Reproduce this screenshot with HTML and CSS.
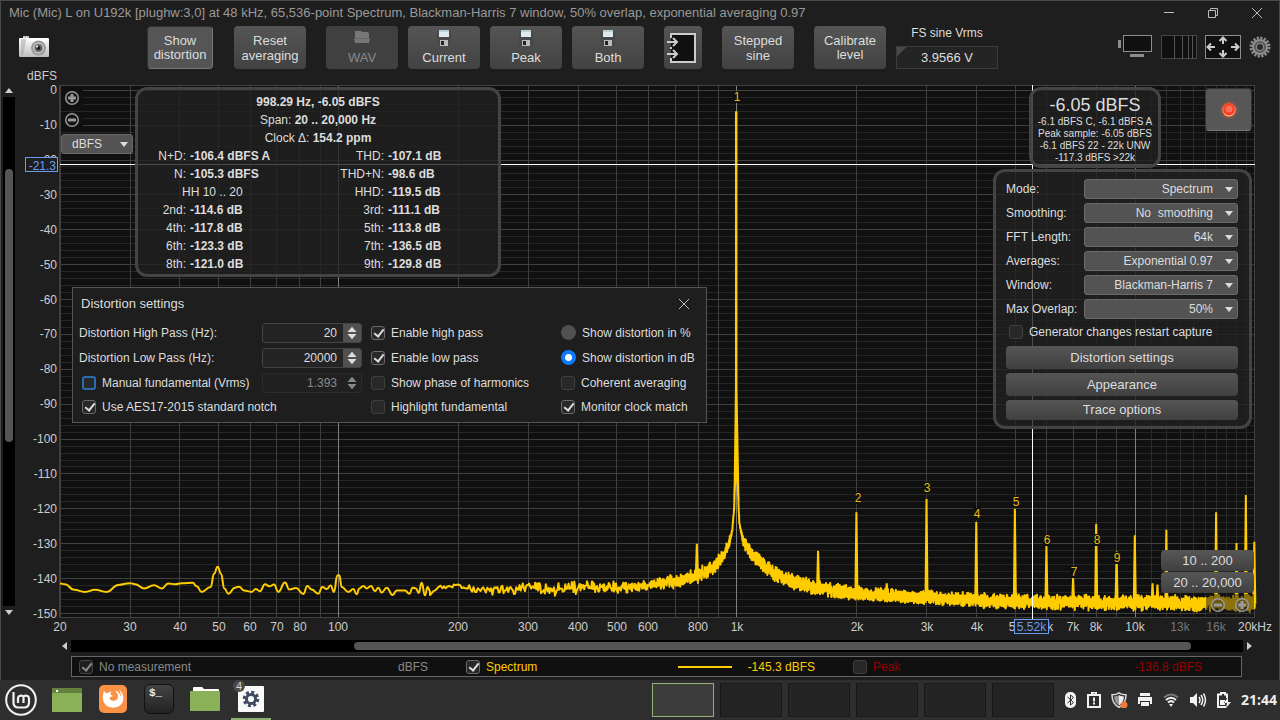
FILE: index.html
```html
<!DOCTYPE html>
<html lang="en">
<head>
    <meta charset="UTF-8">
    <meta name="viewport" content="width=device-width, initial-scale=1.0">
    <title>Spectrum Analyser</title>
    <link rel="stylesheet" href="styles.css">
</head>
<body>
    <main class="window">
        <header class="titlebar">
            <h1>Mic (Mic) L on U192k [plughw:3,0] at 48 kHz, 65,536-point Spectrum, Blackman-Harris 7 window, 50% overlap, exponential averaging 0.97</h1>
            <div class="window-buttons">
                <button type="button" aria-label="Minimise"><svg width="12" height="12"><path d="M1 5.500h10"/></svg></button>
                <button type="button" aria-label="Restore"><svg width="12" height="12"><path d="M1.500 3.500h7v7h-7zM3.500 3.500v-2h7v7h-2"/></svg></button>
                <button type="button" aria-label="Close"><svg width="12" height="12"><path d="M1 1l10 10M11 1L1 11"/></svg></button>
            </div>
        </header>

        <div class="toolbar">
            <button type="button" class="icon-button camera" aria-label="Capture graph">
                <svg width="30" height="22" viewBox="0 0 30 22">
                    <defs>
                        <linearGradient id="cam" x2="0" y2="1"><stop offset="0" stop-color="#fff"/><stop offset="1" stop-color="#bdbdbd"/></linearGradient>
                    </defs>
                    <path d="M4 0h6v3H4z" fill="#c9c9c9"/>
                    <rect y="2" width="30" height="19" rx="1" fill="url(#cam)"/>
                    <path d="M2 3h5v2l-3 14H2z" fill="#999" opacity=".45"/>
                    <path d="M10 3h17v2H10z" fill="#fff"/>
                    <circle cx="19.500" cy="12" r="7.500" fill="#999"/>
                    <circle cx="19.500" cy="12" r="5.500" fill="#c4c4c4"/>
                    <circle cx="19.500" cy="12" r="4" fill="#686868"/>
                    <circle cx="19.500" cy="12" r="2" fill="#151d30"/>
                    <circle cx="18" cy="10.500" r="1" fill="#fff"/>
                </svg>
            </button>
            <button type="button" class="tool pressed">Show distortion</button>
            <button type="button" class="tool">Reset averaging</button>
            <div class="save-group">
                <button type="button" class="tool with-icon" disabled>
                    <svg width="16" height="14" viewBox="0 0 16 14"><path d="M1 1h6l1 1h6l1 2v4l1 1-1 4H1L0 9l1-1z" fill="#777"/><path d="M1 8.500h14" stroke="#666"/></svg>
                    WAV
                </button>
                <button type="button" class="tool with-icon"><svg width="16" height="16"><use href="#disk"/></svg>Current</button>
                <button type="button" class="tool with-icon"><svg width="16" height="16"><use href="#disk"/></svg>Peak</button>
                <button type="button" class="tool with-icon"><svg width="16" height="16"><use href="#disk"/></svg>Both</button>
            </div>
            <button type="button" class="tool import" aria-label="Import">
                <svg width="32" height="32" viewBox="0 0 32 32" fill="none">
                    <path d="M5 2h24v28H5z" fill="#101010"/>
                    <path d="M5 6V2h24v28H5v-4M5 15v2" stroke="#ccc" stroke-width="2"/>
                    <path d="M1 10h10M7 6l4 4-4 4M1 22h10M7 18l4 4-4 4" stroke="#ccc" stroke-width="2"/>
                </svg>
            </button>
            <button type="button" class="tool">Stepped<br>sine</button>
            <button type="button" class="tool tight">Calibrate level</button>
            <div class="fs-level">
                <label for="fsVrms">FS sine Vrms</label>
                <input type="text" id="fsVrms" value="3.9566 V">
            </div>
            <div class="view-buttons">
                <button type="button" class="icon-button" aria-label="Scrollbars">
                    <svg width="36" height="24"><rect x="6.500" y=".5" width="28" height="16" fill="#101010" stroke="#8c8c8c"/><path d="M1 5h3v8H1zM13 19h14v3H13z" fill="#8c8c8c"/></svg>
                </button>
                <button type="button" class="icon-button" aria-label="Frequency axis">
                    <svg width="36" height="24"><rect x=".5" y=".5" width="35" height="23" fill="#101010" stroke="#444"/><path d="M13.500 0v24M21.500 0v24M27.500 0v24M31.500 0v24" stroke="#555"/></svg>
                </button>
                <button type="button" class="icon-button" aria-label="Graph limits">
                    <svg width="36" height="24" fill="none"><rect x=".5" y=".5" width="35" height="23" fill="#101010" stroke="#8c8c8c"/><path d="M10 12H3M6 8.500L2.500 12 6 15.500M26 12h7M30 8.500l3.500 3.500-3.500 3.500M18 9V3M14.500 6L18 2.500 21.500 6M18 15v6M14.500 18l3.500 3.500 3.500-3.500" stroke="#ccc" stroke-width="2"/></svg>
                </button>
                <button type="button" class="icon-button" aria-label="Preferences">
                    <svg width="22" height="22" viewBox="-11 -11 22 22">
                        <circle r="9" fill="none" stroke="#8a8a8a" stroke-width="3" stroke-dasharray="2.200 1.334"/>
                        <circle r="8" fill="#8c8c8c"/>
                        <circle r="5" fill="none" stroke="#5a5a5a" stroke-width="2"/>
                        <circle r="3" fill="#2a2a2a"/>
                    </svg>
                </button>
            </div>
        </div>

        <section class="workspace">
            <div class="vscroll" aria-hidden="true">
                <span class="arrow up"></span>
                <div class="track"><div class="thumb"></div></div>
                <span class="arrow down"></span>
            </div>

            <div class="graph" id="graph">
                <svg class="graph-svg" id="graphSvg"></svg>

                <div class="scale-controls">
                    <button type="button" class="zoom" aria-label="Zoom in"><svg width="16" height="16"><use href="#plus"/></svg></button>
                    <button type="button" class="zoom" aria-label="Zoom out"><svg width="16" height="16"><use href="#minus"/></svg></button>
                    <div class="select units">
                        <select aria-label="Units"><option>dBFS</option></select>
                    </div>
                </div>

                <div class="panel readout">
                    <p><b>998.29 Hz, -6.05 dBFS</b></p>
                    <p>Span: <b>20 .. 20,000 Hz</b></p>
                    <p>Clock Δ: <b>154.2 ppm</b></p>
                    <table>
                        <tr><th>N+D:</th><td>-106.4 dBFS A</td><th>THD:</th><td>-107.1 dB</td></tr>
                        <tr><th>N:</th><td>-105.3 dBFS</td><th>THD+N:</th><td>-98.6 dB</td></tr>
                        <tr><td colspan="2" class="hh">HH 10 .. 20</td><th>HHD:</th><td>-119.5 dB</td></tr>
                        <tr><th>2nd:</th><td>-114.6 dB</td><th>3rd:</th><td>-111.1 dB</td></tr>
                        <tr><th>4th:</th><td>-117.8 dB</td><th>5th:</th><td>-113.8 dB</td></tr>
                        <tr><th>6th:</th><td>-123.3 dB</td><th>7th:</th><td>-136.5 dB</td></tr>
                        <tr><th>8th:</th><td>-121.0 dB</td><th>9th:</th><td>-129.8 dB</td></tr>
                    </table>
                </div>

                <div class="panel level">
                    <strong>-6.05 dBFS</strong>
                    <span>-6.1 dBFS C, -6.1 dBFS A</span>
                    <span>Peak sample: -6.05 dBFS</span>
                    <span>-6.1 dBFS 22 - 22k UNW</span>
                    <span>-117.3 dBFS &gt;22k</span>
                </div>

                <button type="button" class="record" aria-label="Record">
                    <svg width="20" height="20" viewBox="-10 -10 20 20"><circle r="9" fill="#ff6030" opacity=".2"/><circle r="7.500" fill="#c64a2c" opacity=".6"/><circle r="6.500" fill="#f0d09c"/><circle cy="-.5" r="6" fill="#ff3c20"/><circle cy="-1" r="3.500" fill="#ff7058"/></svg>
                </button>

                <form class="panel options">
                    <div class="option"><label for="mode">Mode:</label><div class="select"><select id="mode"><option>Spectrum</option></select></div></div>
                    <div class="option"><label for="smoothing">Smoothing:</label><div class="select"><select id="smoothing"><option>No&nbsp; smoothing</option></select></div></div>
                    <div class="option"><label for="fft">FFT Length:</label><div class="select"><select id="fft"><option>64k</option></select></div></div>
                    <div class="option"><label for="averages">Averages:</label><div class="select"><select id="averages"><option>Exponential 0.97</option></select></div></div>
                    <div class="option"><label for="windowType">Window:</label><div class="select"><select id="windowType"><option>Blackman-Harris 7</option></select></div></div>
                    <div class="option"><label for="overlap">Max Overlap:</label><div class="select"><select id="overlap"><option>50%</option></select></div></div>
                    <label class="check"><input type="checkbox">Generator changes restart capture</label>
                    <button type="button" class="wide">Distortion settings</button>
                    <button type="button" class="wide">Appearance</button>
                    <button type="button" class="wide">Trace options</button>
                </form>

                <form class="dialog">
                    <div class="dialog-title">
                        <h2>Distortion settings</h2>
                        <button type="button" aria-label="Close"><svg width="12" height="12"><path d="M1 1l10 10M11 1L1 11"/></svg></button>
                    </div>
                    <div class="dialog-grid">
                        <label for="highPass">Distortion High Pass (Hz):</label>
                        <div class="spin"><input type="text" id="highPass" value="20"><svg width="18" height="20"><use href="#spin"/></svg></div>
                        <label class="check"><input type="checkbox" checked>Enable high pass</label>
                        <label class="check"><input type="radio" name="unit">Show distortion in %</label>

                        <label for="lowPass">Distortion Low Pass (Hz):</label>
                        <div class="spin"><input type="text" id="lowPass" value="20000"><svg width="18" height="20"><use href="#spin"/></svg></div>
                        <label class="check"><input type="checkbox" checked>Enable low pass</label>
                        <label class="check"><input type="radio" name="unit" checked>Show distortion in dB</label>

                        <label class="check focused"><input type="checkbox">Manual fundamental (Vrms)</label>
                        <div class="spin off"><input type="text" aria-label="Fundamental Vrms" value="1.393" disabled><svg width="18" height="20"><use href="#spin"/></svg></div>
                        <label class="check"><input type="checkbox">Show phase of harmonics</label>
                        <label class="check"><input type="checkbox">Coherent averaging</label>

                        <label class="check double"><input type="checkbox" checked>Use AES17-2015 standard notch</label>
                        <label class="check"><input type="checkbox">Highlight fundamental</label>
                        <label class="check"><input type="checkbox" checked>Monitor clock match</label>
                    </div>
                </form>

                <div class="ranges">
                    <button type="button">10 .. 200</button>
                    <button type="button">20 .. 20,000</button>
                    <div class="range-zoom">
                        <button type="button" class="zoom" aria-label="Zoom out"><svg width="16" height="16"><use href="#minus"/></svg></button>
                        <button type="button" class="zoom" aria-label="Zoom in"><svg width="16" height="16"><use href="#plus"/></svg></button>
                    </div>
                </div>
            </div>
        </section>

        <div class="hscroll" aria-hidden="true">
            <span class="arrow left"></span>
            <div class="track"><div class="thumb"></div></div>
            <span class="arrow right"></span>
        </div>

        <div class="traces">
            <div class="trace none"><label class="check"><input type="checkbox" checked>No measurement</label><span>dBFS</span></div>
            <div class="trace spectrum"><label class="check"><input type="checkbox" checked>Spectrum</label><i></i><span>-145.3 dBFS</span></div>
            <div class="trace peak"><label class="check"><input type="checkbox">Peak</label><span>-136.8 dBFS</span></div>
        </div>
    </main>

    <footer class="taskbar">
        <nav class="launchers">
            <button type="button" aria-label="Menu">
                <svg width="34" height="34" viewBox="0 0 34 34" fill="none" stroke="#f2f2f2">
                    <circle cx="17" cy="17" r="14.800" stroke-width="2"/>
                    <path d="M9.500 9v10.500q0 5 5 5h5.500q5 0 5-5V15.500a3 3 0 0 0-5.500-1.500 3 3 0 0 0-5.500 1.500V20M19.500 15v5" stroke-width="2.200"/>
                </svg>
            </button>
            <button type="button" aria-label="Show desktop">
                <svg width="34" height="34" viewBox="0 0 34 34"><path d="M2 5h30v24H2z" fill="#8bb158"/><path d="M2 5h30v5H2z" fill="#64823e"/><path d="M6 7h2v2H6z" fill="#fff"/></svg>
            </button>
            <button type="button" aria-label="Firefox">
                <svg width="34" height="34" viewBox="0 0 34 34"><rect x="3" y="2" width="28" height="28" rx="5" fill="#fb9144"/>
                    <path d="M8 8c1 1.500 2 2.500 4 2l3-2-.5 3.500 2.500 1.500-3.500 1.500c0 4 5 4 7.500 2 2-3 1-6-2-9 4 1 5 4 6 6 0-3-1-5-2-7 5 4 6 11 2 15-5 5-14 4-17-2-2-4-1-8 0-12z" fill="#fff"/></svg>
            </button>
            <button type="button" class="terminal" aria-label="Terminal"><span>$_</span></button>
            <button type="button" aria-label="Files">
                <svg width="34" height="34" viewBox="0 0 34 34"><path d="M5 5q0-1 1-1h8l2 2h14q1 0 1 1v6H5z" fill="#fff"/><rect x="2" y="8" width="30" height="20" rx="1" fill="#8bb158"/></svg>
            </button>
            <button type="button" class="running" aria-label="Analyser">
                <svg width="34" height="34" viewBox="-17 -17 34 34"><rect x="-13" y="-14" width="26" height="26" rx="1" fill="#fafafa"/>
                    <g transform="translate(0 -1)"><circle r="6.800" fill="none" stroke="#3f4b5e" stroke-width="3" stroke-dasharray="3 2.340"/><circle r="4.600" fill="none" stroke="#3f4b5e" stroke-width="3"/></g></svg>
                <span class="badge">4</span>
            </button>
        </nav>
        <div class="desktops">
            <button type="button" class="current" aria-label="Desktop 1"></button>
            <button type="button" aria-label="Desktop 2"></button>
            <button type="button" aria-label="Desktop 3"></button>
            <button type="button" aria-label="Desktop 4"></button>
            <button type="button" aria-label="Desktop 5"></button>
            <button type="button" aria-label="Desktop 6"></button>
        </div>
        <div class="tray">
            <svg width="15" height="16"><rect x="3" width="11" height="16" rx="5" fill="#f2f2f2"/><path d="M5.500 5l6 5.500-3 2.500V3l3 2.500-6 5.500" fill="none" stroke="#2e2e2e"/></svg>
            <svg width="16" height="16"><path d="M2 3h12v12H2z" fill="none" stroke="#f2f2f2" stroke-width="2"/><path d="M5 0h6v4H5zM7 5.500h2v4H7zM7 10.500h2v2H7z" fill="#f2f2f2"/><path d="M7.500 1h1v1h-1z" fill="#2e2e2e"/></svg>
            <svg width="17" height="16"><path d="M8 .8c2 1.500 4 2 7 2 0 6-2 10-7 12.400C3 12.800 1 8.800 1 2.800c3 0 5-.5 7-2z" fill="none" stroke="#d8d8d8" stroke-width="1.500"/><path d="M8 3c1.500 1 3 1.400 5 1.500-.3 4-1.700 7-5 9z" fill="#eee"/><path d="M8 3C6.500 4 5 4.400 3 4.500c.3 4 1.700 7 5 9z" fill="#999"/><circle cx="13" cy="13" r="3.500" fill="#f27835"/></svg>
            <svg width="16" height="16"><path d="M3 1h10v3H3zM1 5h14v7h-2V9H3v3H1zM4 10h8v4H4z" fill="#f2f2f2"/></svg>
            <svg width="18" height="16" fill="none" stroke-width="2"><path d="M2 5.500q7-6 14 0" stroke="#777"/><path d="M4 8q5-4.500 10 0M6 10.500q3-2.800 6 0" stroke="#f2f2f2"/><path d="M7 12l2 3 2-3z" fill="#f2f2f2"/></svg>
            <svg width="18" height="16"><path d="M1 5h3l4-4v14l-4-4H1z" fill="#f2f2f2"/><path d="M10 5q2 3 0 6M12 3q3.500 5 0 10M14.500 1.500q4 6.500 0 13" fill="none" stroke="#f2f2f2" stroke-width="1.500"/></svg>
            <svg width="16" height="16"><path d="M11 6V2.500H9V1H5v1.500H2V15h8" fill="none" stroke="#f2f2f2" stroke-width="2"/><path d="M4 8h5v5H4zM12 5l-4 6h3l-1 5 5-6h-3z" fill="#f2f2f2"/></svg>
            <time>21:44</time>
        </div>
    </footer>

    <!-- Shared symbols -->
    <svg class="symbols" aria-hidden="true">
        <symbol id="disk" viewBox="0 0 16 16">
            <path d="M1 1h14v15H2l-1-1z" fill="#484848"/>
            <path d="M3 0h10v7H3z" fill="#dfeaf0"/><path d="M3 0h10v2H3z" fill="#bcd0da"/>
            <path d="M4 10h8v6H4z" fill="#bbb"/><path d="M5 11h3v4H5z" fill="#222"/>
        </symbol>
        <symbol id="plus" viewBox="0 0 16 16"><circle cx="8" cy="8" r="6.300" fill="#1c1c1c" fill-opacity=".3" stroke="currentColor" stroke-width="1.500"/><path d="M8 4v8M4 8h8" stroke="currentColor" stroke-width="3"/></symbol>
        <symbol id="minus" viewBox="0 0 16 16"><circle cx="8" cy="8" r="6.300" fill="#1c1c1c" fill-opacity=".3" stroke="currentColor" stroke-width="1.500"/><path d="M4 8h8" stroke="currentColor" stroke-width="3"/></symbol>
        <symbol id="spin" viewBox="0 0 18 20"><path d="M4 9l5-6 5 6zM4 11l5 6 5-6z" fill="currentColor"/></symbol>
    </svg>

    <script src="graph.js"></script>
</body>
</html>
```
FILE: styles.css
```css
* {
    box-sizing: border-box;
}
body {
    margin: 0;
    min-height: 100vh;
    display: flex;
    flex-direction: column;
    background: #1e1e1e;
    color: #ddd;
    font-family: "Liberation Sans", Arial, sans-serif;
    font-size: 13px;
    line-height: 16px;
}
button, input, select {
    font: inherit;
    color: inherit;
    margin: 0;
    padding: 0;
    border: none;
    background: none;
}
h1, h2, p {
    margin: 0;
    font-size: 13px;
    font-weight: normal;
}
svg {
    display: block;
}
.symbols {
    position: absolute;
    width: 0;
    height: 0;
}
.window {
    flex: 1;
    display: flex;
    flex-direction: column;
    border: 1px solid #4a4a4a;
    border-bottom: none;
}

/* Title bar */
.titlebar {
    display: flex;
    justify-content: space-between;
    align-items: center;
    height: 24px;
    padding: 0 16px 0 8px;
    color: #999;
}
.window-buttons {
    display: flex;
    gap: 32px;
}
.window-buttons path, .dialog-title path {
    fill: none;
    stroke: #bbb;
}

/* Toolbar */
.toolbar {
    display: flex;
    align-items: flex-start;
    height: 47px;
    padding: 1px 8px 0 18px;
}
.tool {
    width: 72px;
    height: 43px;
    margin-right: 20px;
    border-radius: 4px;
    background: linear-gradient(#555, #424242);
    line-height: 15px;
}
.tool.pressed {
    width: 66px;
    margin-right: 21px;
    background: #555;
    border: 1px solid #333;
    border-bottom-color: #777;
    border-right-color: #777;
    line-height: 14px;
}
.tool.tight {
    line-height: 14px;
}
.camera {
    margin: 10px 98px 0 0;
}
.with-icon {
    display: flex;
    flex-direction: column;
    align-items: center;
    justify-content: space-between;
    padding: 4px 0;
}
.with-icon svg {
    flex: none;
}
.with-icon:disabled {
    color: #888;
    background: #404040;
}
.save-group {
    display: flex;
    gap: 10px;
    margin-right: 20px;
}
.save-group .tool {
    margin-right: 0;
}
.tool.import {
    width: 38px;
    padding-left: 2px;
}
.fs-level {
    display: flex;
    flex-direction: column;
    align-items: center;
    gap: 4px;
    margin-left: -10px;
}
.fs-level label {
    font-size: 12px;
    line-height: 15px;
}
.fs-level input {
    width: 102px;
    height: 23px;
    margin-top: 1px;
    border: 1px solid #3c3c3c;
    background: linear-gradient(135deg, #484848 7px, #242424 7px);
    text-align: center;
}
.view-buttons {
    display: flex;
    align-items: center;
    gap: 8px;
    margin: 9px 0 0 auto;
}

/* Graph */
.workspace {
    flex: 1;
    display: flex;
    min-height: 564px;
}
.vscroll {
    display: flex;
    flex-direction: column;
    align-items: center;
    width: 17px;
    padding: 16px 3px 21px 2px;
    gap: 4px;
}
.vscroll .track {
    flex: 1;
    width: 12px;
    padding: 72px 2px 0;
    background: #000;
}
.vscroll .thumb {
    height: 273px;
    border-radius: 4px;
    background: #555;
}
.arrow {
    border: 4px solid transparent;
}
.arrow.up {
    border-top: none;
    border-bottom: 5px solid #ccc;
}
.arrow.down {
    border-bottom: none;
    border-top: 5px solid #ccc;
}
.arrow.left {
    border-left: none;
    border-right: 5px solid #ccc;
}
.arrow.right {
    border-right: none;
    border-left: 5px solid #ccc;
}
.graph {
    position: relative;
    flex: 1;
}
.graph-svg {
    position: absolute;
    width: 100%;
    height: 100%;
    overflow: visible;
}
.graph-svg .axis {
    fill: #ccc;
}
.graph-svg .dim {
    fill: #777;
}
.graph-svg .harmonic {
    fill: #e8bb14;
}
.graph-svg .cursor {
    fill: #6c9cf0;
}
.panel {
    position: absolute;
    border: 3px solid #444;
    border-radius: 12px;
    background: rgba(32, 32, 32, 0.8);
}
.zoom {
    color: #999;
}
.scale-controls {
    position: absolute;
    top: 18px;
    left: 43px;
    display: flex;
    flex-direction: column;
    gap: 6px;
}
.scale-controls .zoom {
    width: 22px;
    padding-left: 3px;
    background: #101010;
}
.select {
    position: relative;
    flex: 1;
}
.select select {
    display: block;
    appearance: none;
    width: 100%;
    height: 20px;
    padding-right: 24px;
    border: 1px solid #6a6a6a;
    border-radius: 3px;
    background: #535353;
    text-align-last: right;
}
.select::after {
    content: "";
    position: absolute;
    top: 8px;
    right: 5px;
    border: 4px solid transparent;
    border-top: 5px solid #ddd;
    border-bottom: none;
    pointer-events: none;
}
.units {
    width: 72px;
    font-size: 12px;
}
.units select {
    padding: 0 0 0 10px;
    text-align-last: left;
}
.readout {
    top: 15px;
    left: 117px;
    width: 366px;
    padding: 3px 0 1px;
    font-size: 12px;
    line-height: 18px;
}
.readout p {
    font-size: 12px;
    text-align: center;
}
.readout table {
    width: 100%;
    table-layout: fixed;
    border-collapse: collapse;
}
.readout th, .readout td {
    padding: 0;
    text-align: left;
    font-weight: bold;
    white-space: nowrap;
}
.readout th {
    width: 50px;
    padding-right: 2px;
    text-align: right;
    font-weight: normal;
}
.readout th + td {
    padding-left: 2px;
}
.readout td + th {
    width: 86px;
}
.readout .hh {
    padding-left: 44px;
    font-weight: normal;
}
.level {
    top: 15px;
    right: 118px;
    width: 132px;
    height: 81px;
    padding-top: 4px;
    display: flex;
    flex-direction: column;
    align-items: center;
    font-size: 10px;
    line-height: 12px;
}
.level strong {
    font-size: 18px;
    line-height: 22px;
    font-weight: normal;
}
.record {
    position: absolute;
    top: 16px;
    right: 27px;
    width: 47px;
    height: 43px;
    padding-left: 13px;
    border: 1px solid #333;
    border-bottom-color: #777;
    border-radius: 4px;
    background: #575757;
}
.options {
    top: 97px;
    right: 27px;
    width: 259px;
    padding: 7px 11px 6px 10px;
    display: flex;
    flex-direction: column;
    gap: 4px;
    font-size: 12px;
}
.option {
    display: flex;
    align-items: center;
}
.option label {
    width: 78px;
}
.options .check {
    margin: 1px 0 2px 3px;
    height: 16px;
}
.wide {
    height: 23px;
    border-radius: 4px;
    background: linear-gradient(#555, #404040);
    font-size: 13px;
}
.wide:last-child {
    height: 20px;
}

/* Check boxes and radios */
.check {
    display: flex;
    align-items: center;
    gap: 6px;
    white-space: nowrap;
}
.check input {
    appearance: none;
    position: relative;
    flex: none;
    width: 14px;
    height: 14px;
    border: 1px solid #404040;
    border-radius: 3px;
    background: #282828;
}
.check input:checked {
    border-color: #6a6a6a;
}
.check input[type="checkbox"]:checked::after {
    content: "";
    position: absolute;
    top: 0;
    left: 4px;
    width: 4px;
    height: 8px;
    border: solid #ddd;
    border-width: 0 2px 2px 0;
    transform: rotate(38deg);
}
.check input[type="radio"] {
    width: 15px;
    height: 15px;
    border: none;
    border-radius: 50%;
    background: #505050;
}
.check input[type="radio"]:checked {
    background: radial-gradient(circle, #fff 3px, #0a7bff 4px);
}
.check.focused input {
    border: 2px solid #2a6db0;
}

/* Distortion dialog */
.dialog {
    position: absolute;
    top: 215px;
    left: 54px;
    width: 635px;
    height: 136px;
    padding: 8px 7px 0 6px;
    border: 1px solid #555;
    background: #1e1e1e;
}
.dialog-title {
    display: flex;
    justify-content: space-between;
    padding: 0 9px 0 2px;
}
.dialog-grid {
    display: grid;
    grid-template-columns: 183px 109px 190px 1fr;
    grid-template-rows: 25px 25px 25px 23px;
    align-items: center;
    margin-top: 8px;
    font-size: 12px;
}
.focused, .double {
    padding-left: 3px;
}
.double {
    grid-column: span 2;
}
.spin {
    display: flex;
    width: 100px;
    height: 20px;
    border: 1px solid #444;
    border-radius: 3px;
    background: #242424;
    overflow: hidden;
}
.spin input {
    width: 80px;
    padding-right: 6px;
    text-align: right;
}
.spin svg {
    height: 18px;
    background: #505050;
}
.spin.off {
    border-color: #2c2c2c;
    background: #202020;
    color: #888;
}
.spin.off svg {
    background: none;
}

/* Range buttons */
.ranges {
    position: absolute;
    right: 25px;
    bottom: 20px;
    width: 93px;
    display: flex;
    flex-direction: column;
    align-items: flex-end;
    gap: 1px;
}
.ranges > button {
    width: 93px;
    height: 21px;
    border-radius: 4px;
    background: linear-gradient(#575757, #404040);
}
.range-zoom {
    display: flex;
    gap: 8px;
    width: 48px;
    padding: 3px 4px;
    background: rgba(24, 24, 24, 0.5);
}

/* Horizontal scroll bar and trace list */
.hscroll {
    display: flex;
    align-items: center;
    gap: 4px;
    padding: 4px 27px 0 61px;
}
.hscroll .track {
    flex: 1;
    padding: 2px 52px 2px 283px;
    background: #000;
}
.hscroll .thumb {
    height: 8px;
    border-radius: 4px;
    background: #555;
}
.traces {
    display: flex;
    height: 21px;
    margin: 4px 37px 3px 70px;
    border: 1px solid #666;
    background: #101010;
    font-size: 12px;
}
.trace {
    display: flex;
    align-items: center;
    padding-left: 7px;
    width: 387px;
}
.trace span {
    margin-left: auto;
    padding-right: 31px;
}
.trace.none {
    color: #888;
}
.trace.none input {
    opacity: 0.6;
}
.trace.spectrum {
    color: #fc0;
}
.trace.spectrum i {
    width: 54px;
    height: 2px;
    margin-left: auto;
    background: #fc0;
}
.trace.spectrum span {
    margin-left: 16px;
}
.trace.peak {
    flex: 1;
    color: #900;
}
.trace.peak span {
    padding-right: 39px;
}

/* Task bar */
.taskbar {
    display: flex;
    align-items: center;
    height: 40px;
    padding-left: 4px;
    background: #2e2e2e;
}
.launchers {
    display: flex;
    gap: 12px;
}
.launchers button {
    position: relative;
    width: 34px;
    height: 40px;
    padding: 3px 0;
}
.launchers .terminal {
    width: 30px;
    height: 30px;
    margin: 4px 2px;
    padding: 0 4px;
    border: 1px solid #111;
    border-radius: 6px;
    background: linear-gradient(#444, #222);
    color: #eee;
    font: bold 11px/12px "Liberation Mono", monospace;
    text-align: left;
}
.terminal span {
    display: block;
    height: 24px;
}
.running::after {
    content: "";
    position: absolute;
    left: -3px;
    right: -3px;
    bottom: 0;
    height: 2px;
    background: #8fb070;
}
.badge {
    position: absolute;
    top: 0;
    left: -1px;
    width: 12px;
    height: 12px;
    border-radius: 50%;
    background: #4a4a4a;
    color: #ddd;
    font: 10px/12px "Noto Sans", sans-serif;
}
.desktops {
    display: flex;
    gap: 6px;
    margin-left: auto;
}
.desktops button {
    width: 62px;
    height: 34px;
    border: 1px solid #181818;
    background: #242424;
}
.desktops .current {
    border-color: #94b077;
    background: #3c3c3c;
}
.tray {
    display: flex;
    align-items: center;
    gap: 9px;
    padding: 0 3px 0 8px;
}
.tray time {
    color: #eee;
    font: bold 14px/16px "Noto Sans", sans-serif;
}
```
FILE: graph.js
```js
const SVG_NS = 'http://www.w3.org/2000/svg';
const graph = document.getElementById('graph');
const svg = document.getElementById('graphSvg');

const MARGIN = { left: 42, top: 13, right: 24, bottom: 19 };
const MIN_HZ = 20;
const MAX_HZ = 20000;
const TOP_DB = 1.5;
const BOTTOM_DB = -151;

// Low end of the trace: position along the axis (0 - 3585), tenths of a dB below -140
const lowEnd = [
    [0, 14], [15, 16], [42, 32], [75, 38], [105, 32], [140, 38], [175, 18], [210, 13], [225, 16],
    [252, 28], [282, 19], [305, 28], [325, 14], [345, 16], [365, 13], [398, 12], [410, 22],
    [425, 38], [452, 24], [462, -14], [473, -34], [483, -14], [493, 28], [505, 43], [525, 26],
    [537, 23], [552, 34], [575, 38], [587, 30], [600, 36], [615, 16], [628, 22], [642, 17],
    [655, 38], [675, 11], [688, 31], [708, 27], [730, 44], [742, 21], [755, 31], [775, 43],
    [787, 24], [800, 30], [812, 20], [822, 38], [832, -9], [838, -10], [845, 24], [865, 38],
    [880, 30], [890, 45], [898, 28], [910, 21], [920, 28], [933, 21], [945, 36], [955, 26],
    [965, 40], [980, 26], [998, 47], [1010, 34], [1035, 34], [1048, 43], [1058, 26], [1068, 28],
    [1076, 41], [1085, 12], [1095, 48], [1103, 24], [1110, 36]
];

// Average noise level: frequency, dB, spread
const noiseFloor = [
    [172, -143.5, 0.8], [198, -141.5, 0.8], [225, -143.6, 1], [260, -143.2, 1.1], [300, -142.2, 1.3],
    [340, -143.3, 1.3], [400, -142.4, 1.5], [500, -142.8, 1.3], [600, -141.8, 1.3], [700, -140.8, 1.5],
    [800, -139, 1.5], [880, -136.5, 1.5], [930, -133, 1.4], [960, -129.5, 1.2], [975, -125.5, 0.6],
    [985, -120, 0.3], [992, -110, 0.2], [998.3, -104, 0], [1005, -113, 0.2], [1015, -124, 0.4],
    [1040, -129.5, 1.3], [1080, -132.5, 1.5], [1150, -135.5, 1.6], [1250, -138.7, 1.6], [1400, -141, 1.6],
    [1600, -142.8, 1.5], [1900, -144, 1.5], [2400, -144.8, 1.5], [3500, -146, 1.5], [5500, -146.7, 1.6], [20000, -147.2, 1.7]
];

const peaks = [
    [794, -130], [1600, -132], [1997, -121], [2380, -141.3], [2995, -117.2], [3993, -123.8],
    [4991, -120], [5990, -130.6], [6988, -139.8], [7986, -124.3], [8985, -132.2], [9983, -127.6],
    [11060, -141.3], [11380, -141.7], [11980, -126], [15973, -121], [17970, -129.8], [18968, -116], [19920, -129.4]
];

// Label, frequency and level of its centre
const harmonics = [
    ['1', 1003, -2], ['2', 2010, -117], ['3', 3010, -114], ['4', 4020, -121.5], ['5', 5030, -118],
    ['6', 6000, -128.8], ['7', 7030, -138], ['8', 8030, -128.8], ['9', 9020, -134]
];

const freqLabels = [
    [20, '20'], [30, '30'], [40, '40'], [50, '50'], [60, '60'], [70, '70'], [80, '80'], [100, '100'],
    [200, '200'], [300, '300'], [400, '400'], [500, '500'], [600, '600'], [800, '800'], [1000, '1k'],
    [2000, '2k'], [3000, '3k'], [4000, '4k'], [5000, '5k'], [6000, '6k'], [7000, '7k'], [8000, '8k'],
    [10000, '10k'], [13000, '13k'], [16000, '16k'], [20000, '20kHz']
];

function add(name, attrs, text) {
    const el = document.createElementNS(SVG_NS, name);
    for (const key in attrs) {
        el.setAttribute(key, attrs[key]);
    }
    if (text) {
        el.textContent = text;
    }
    svg.appendChild(el);
    return el;
}

function floorAt(hz) {
    let i = 1;
    while (i < noiseFloor.length - 1 && noiseFloor[i][0] < hz) {
        i++;
    }
    const a = noiseFloor[i - 1];
    const b = noiseFloor[i];
    const t = Math.log(hz / a[0]) / Math.log(b[0] / a[0]);
    return [a[1] + (b[1] - a[1]) * t, a[2] + (b[2] - a[2]) * t];
}

function draw() {
    svg.replaceChildren();

    const left = MARGIN.left;
    const top = MARGIN.top;
    const width = graph.clientWidth - left - MARGIN.right;
    const height = graph.clientHeight - top - MARGIN.bottom;
    const right = left + width;
    const bottom = top + height;
    const decades = Math.log10(MAX_HZ / MIN_HZ);
    const xOf = hz => left + Math.log10(hz / MIN_HZ) / decades * width;
    const yOf = db => top + (TOP_DB - db) / (TOP_DB - BOTTOM_DB) * height;
    const snap = v => Math.floor(v) + 0.5;

    const hLine = (y, color) => add('path', { d: `M${left} ${snap(y)}H${right}`, stroke: color });
    const vLine = (x, color) => add('path', { d: `M${snap(x)} ${top}V${bottom}`, stroke: color });

    add('rect', { x: left, y: top, width, height, fill: '#101010' });

    // Grid
    for (let db = 0; db >= -150; db -= 2) {
        if (db % 10) hLine(yOf(db), '#262626');
    }
    for (let k = 11; k < 20; k++) {
        vLine(xOf(k * 1000), '#2a2a2a');
    }
    for (let db = 0; db >= -150; db -= 10) {
        hLine(yOf(db), '#404040');
    }
    for (let decade = 10; decade <= 1000; decade *= 10) {
        for (let k = 2; k <= 10; k++) {
            const hz = decade * k;
            vLine(xOf(hz), k === 10 ? '#808080' : '#404040');
        }
    }
    add('rect', { x: left - 0.5, y: top + 0.5, width, height, fill: 'none', stroke: '#404040' });

    // Axis labels
    add('text', { x: 39, y: 8, class: 'axis', 'text-anchor': 'end', 'font-size': 12 }, 'dBFS');
    for (let db = 0; db >= -150; db -= 10) {
        add('text', { x: 39, y: Math.round(yOf(db)) + 4, class: 'axis', 'text-anchor': 'end', 'font-size': 12 }, String(db));
    }
    freqLabels.forEach(([hz, text]) => {
        const dim = hz === 13000 || hz === 16000;
        add('text', { x: Math.round(xOf(hz)), y: bottom + 14, class: dim ? 'dim' : 'axis', 'text-anchor': 'middle', 'font-size': 12 }, text);
    });

    // Trace
    let seed = 77;
    const random = () => {
        seed = (seed * 16807) % 2147483647;
        return seed / 2147483647;
    };
    const low = lowEnd.map(([u, d]) => [left + u / 3585 * width, yOf(-140 - d / 10)]);
    let path = `M${low[0]}`;
    for (let i = 1; i < low.length; i++) {
        const mid = (low[i][0] + low[i - 1][0]) / 2;
        path += `C${mid} ${low[i - 1][1]} ${mid} ${low[i][1]} ${low[i]}`;
    }
    let x = low[low.length - 1][0];
    while (x < right) {
        const hz = MIN_HZ * Math.pow(10, (x - left) / width * decades);
        const [db, spread] = floorAt(hz);
        const noise = (random() + random() - 1) * 1.5 * spread;
        path += `L${x.toFixed(2)} ${yOf(db + noise).toFixed(1)}`;
        x += Math.max(0.15, 310 / hz * Math.min(1, 400 / hz));
    }
    add('path', { d: path, fill: 'none', stroke: '#fc0', 'stroke-width': 2, 'stroke-linejoin': 'round' });

    peaks.forEach(([hz, db]) => {
        const px = xOf(hz);
        const base = yOf(floorAt(hz)[0]);
        add('path', { d: `M${px - 2} ${base}L${px - 1} ${yOf(db)}H${px + 1}L${px + 2} ${base}z`, fill: '#fc0' });
    });
    const main = xOf(998.3);
    add('path', { d: `M${main - 3} ${yOf(-118)}L${main - 1.5} ${yOf(-85)}V${yOf(-6)}H${main + 1}V${yOf(-85)}L${main + 3} ${yOf(-118)}L${main} ${yOf(-112)}z`, fill: '#fc0' });

    harmonics.forEach(([text, hz, db]) => {
        const hx = Math.round(xOf(hz));
        const hy = Math.round(yOf(db));
        add('rect', { x: hx - 4, y: hy - 6, width: 8, height: 12, fill: '#101010' });
        add('text', { x: hx, y: hy + 4, class: 'harmonic', 'text-anchor': 'middle', 'font-size': 12 }, text);
    });

    // Cursor
    const cx = snap(xOf(5520));
    const cy = snap(yOf(-21.3));
    add('path', { d: `M${left} ${cy}H${right}M${cx} ${top}V${bottom + 2}`, stroke: '#fff' });
    add('rect', { x: cx - 18, y: bottom + 2.5, width: 34, height: 14, fill: '#1e1e1e', stroke: '#6c9cf0' });
    add('text', { x: cx - 1, y: bottom + 14, class: 'cursor', 'text-anchor': 'middle', 'font-size': 12 }, '5.52k');
    add('rect', { x: 7.5, y: cy - 7, width: 32, height: 14, fill: '#1e1e1e', stroke: '#6c9cf0' });
    add('text', { x: 38, y: cy + 5, class: 'cursor', 'text-anchor': 'end', 'font-size': 12 }, '-21.3');
}

window.addEventListener('resize', draw);
draw();
```
